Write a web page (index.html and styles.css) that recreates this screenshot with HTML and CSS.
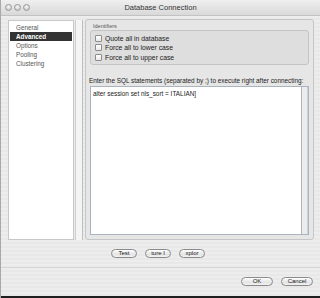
FILE: index.html
```html
<!DOCTYPE html>
<html lang="en">
<head>
  <meta charset="UTF-8">
  <title>Database Connection</title>
  <link rel="stylesheet" href="styles.css">
</head>
<body>
  <div class="window">
    <div class="titlebar">
      <div class="lights">
        <span class="light"></span>
        <span class="light"></span>
        <span class="light"></span>
      </div>
      <div class="title">Database Connection</div>
      <div class="lights-spacer"></div>
    </div>

    <div class="content">
      <ul class="sidebar">
        <li>General</li>
        <li class="selected">Advanced</li>
        <li>Options</li>
        <li>Pooling</li>
        <li>Clustering</li>
      </ul>
      <div class="splitter"></div>

      <div class="panel">
        <div class="group-title">Identifiers</div>
        <div class="group">
          <label class="check"><span class="box"></span>Quote all in database</label>
          <label class="check"><span class="box"></span>Force all to lower case</label>
          <label class="check"><span class="box"></span>Force all to upper case</label>
        </div>

        <div class="sql-label">Enter the SQL statements (separated by ;) to execute right after connecting:</div>
        <div class="sql-pane">
          <div class="sql-text">alter session set nls_sort = ITALIAN]</div>
          <div class="sql-track"></div>
        </div>
      </div>
    </div>

    <div class="actions">
      <button class="btn">Test</button>
      <button class="btn">ture I</button>
      <button class="btn">xplor</button>
    </div>

    <div class="footer">
      <button class="btn wide">OK</button>
      <button class="btn wide">Cancel</button>
    </div>
    <div class="bottom-edge"></div>
  </div>
</body>
</html>
```

FILE: styles.css
```css
body {
  margin: 0;
  font-family: "Liberation Sans", Arial, sans-serif;
  color: #1a1a1a;
  background: #2a2a2a;
}
.window {
  width: 320px;
  height: 298px;
  display: flex;
  flex-direction: column;
  background: repeating-linear-gradient(#ededed 0, #ededed 2px, #e8e8e8 2px, #e8e8e8 4px);
  border-left: 1px solid #a8a8a8;
  box-sizing: border-box;
}
.titlebar {
  height: 15px;
  display: flex;
  align-items: center;
  padding: 0 4px;
  background: linear-gradient(#efefef, #d9d9d9);
  border-bottom: 1px solid #c2c2c2;
}
.lights,
.lights-spacer {
  display: flex;
  gap: 2px;
  width: 26px;
}
.light {
  width: 7px;
  height: 7px;
  border-radius: 50%;
  background: radial-gradient(circle at 50% 35%, #fafafa, #b9b9b9);
  border: 1px solid #9a9a9a;
  box-sizing: border-box;
}
.title {
  flex: 1;
  text-align: center;
  font-size: 7.5px;
  color: #333;
}
.content {
  display: flex;
  padding: 3px 6px 0 7px;
  height: 222px;
}
.sidebar {
  list-style: none;
  margin: 1px 0 0;
  padding: 2px 1px;
  width: 66px;
  height: 220px;
  box-sizing: border-box;
  background: #fff;
  border: 1px solid #c8c8c8;
  font-size: 6.3px;
  color: #555;
}
.sidebar li {
  height: 9px;
  line-height: 9px;
  padding-left: 6px;
}
.sidebar .selected {
  background: #333;
  color: #fff;
  font-weight: bold;
}
.splitter {
  width: 6px;
  margin: 1px 2px 0 1px;
  border-left: 1px solid #cfcfcf;
  border-right: 1px solid #bdbdbd;
  background: #f4f4f4;
}
.panel {
  flex: 1;
  min-width: 0;
  display: flex;
  flex-direction: column;
  padding: 3px 4px 4px;
  border: 1px solid #c6c6c6;
  border-radius: 3px;
  background: #e6e6e6;
}
.group-title {
  font-size: 5.5px;
  color: #555;
  height: 7px;
  line-height: 7px;
  margin-left: 3px;
}
.group {
  display: flex;
  flex-direction: column;
  padding: 3px 4px 2px;
  height: 35px;
  box-sizing: border-box;
  border: 1px solid #c4c4c4;
  border-radius: 3px;
  background: #dedede;
}
.check {
  display: flex;
  align-items: center;
  gap: 3px;
  height: 10px;
  font-size: 6.8px;
  color: #222;
}
.box {
  width: 7px;
  height: 7px;
  box-sizing: border-box;
  border: 1px solid #8c8c8c;
  border-radius: 1px;
  background: linear-gradient(#fff, #e8e8e8);
}
.sql-label {
  margin-top: 12px;
  margin-left: -1px;
  font-size: 6.4px;
  color: #222;
  height: 9px;
  white-space: nowrap;
}
.sql-pane {
  flex: 1;
  display: flex;
  border: 1px solid #a9b4bf;
  background: #fff;
}
.sql-text {
  flex: 1;
  padding: 3px 2px;
  font-size: 6.4px;
  color: #222;
}
.sql-track {
  width: 5px;
  border-left: 1px solid #b4b4b4;
  border-right: 1px solid #c9d1d9;
  background: #ececec;
}
.actions {
  display: flex;
  gap: 8px;
  padding-left: 110px;
  margin-top: 9px;
  height: 10px;
}
.btn {
  height: 9px;
  width: 26px;
  padding: 0;
  font-family: inherit;
  font-size: 6px;
  line-height: 7px;
  color: #222;
  border: 1px solid #8a8a8a;
  border-radius: 5px;
  background: linear-gradient(#ffffff, #e4e4e4 60%, #f2f2f2);
  overflow: hidden;
  white-space: nowrap;
}
.footer {
  display: flex;
  justify-content: flex-end;
  gap: 8px;
  margin-top: 8px;
  padding: 9px 7px 0;
  height: 19px;
  border-top: 1px solid #d6d6d6;
}
.btn.wide {
  width: 32px;
}
.bottom-edge {
  margin-top: auto;
  height: 2px;
  background: #1e1e1e;
}
```
